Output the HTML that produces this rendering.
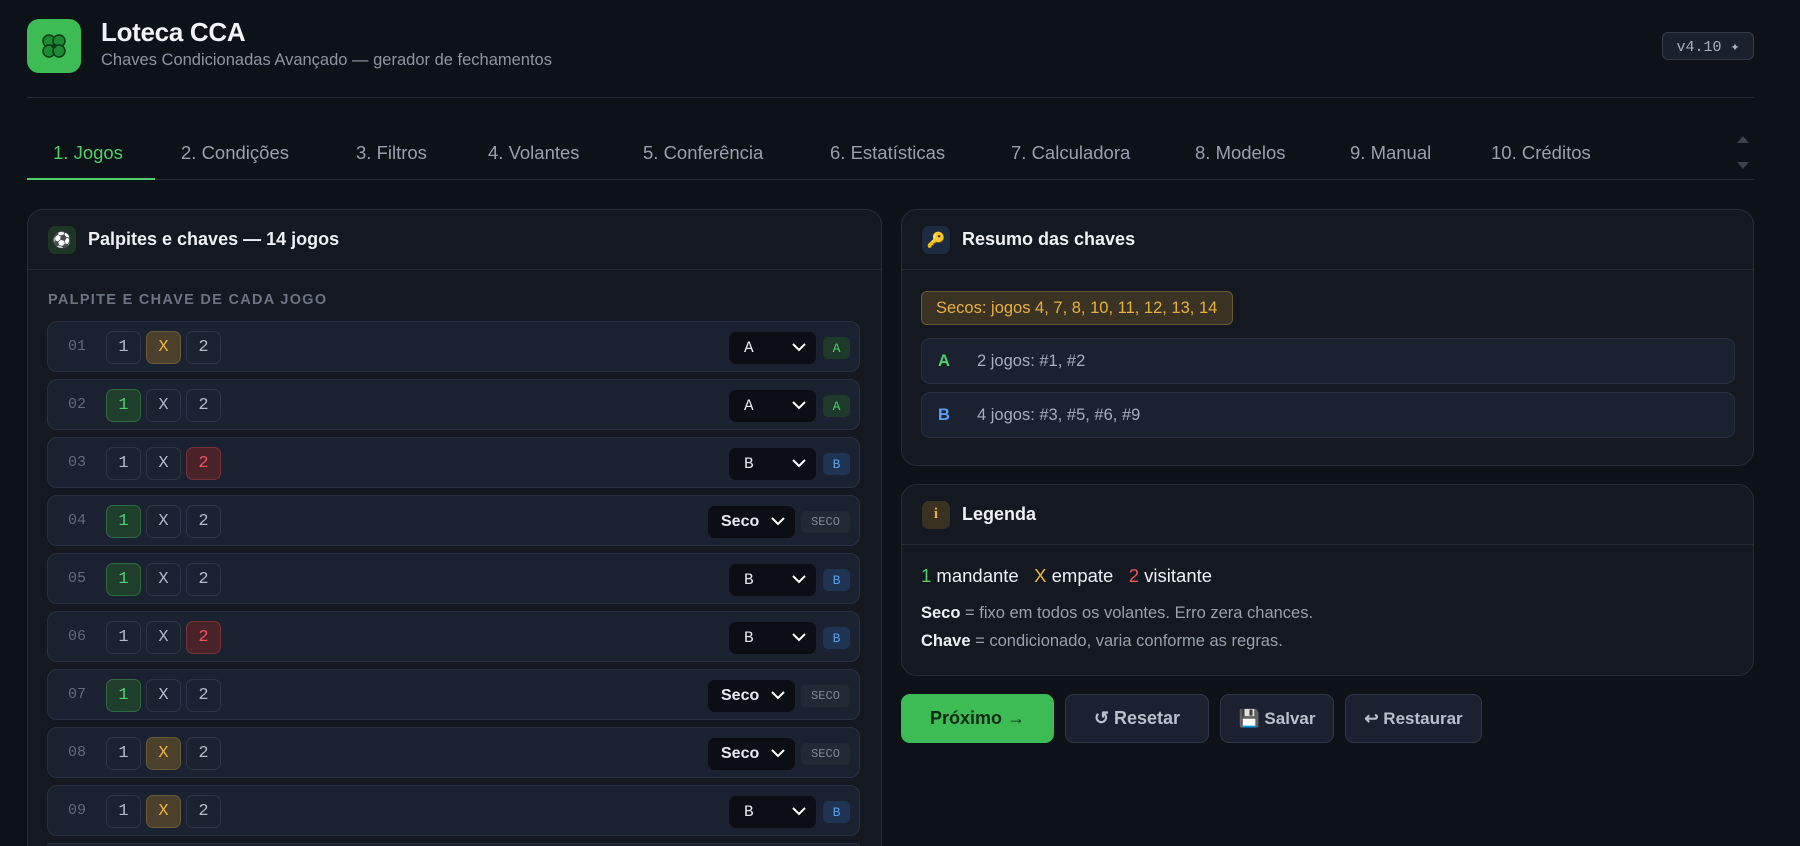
<!DOCTYPE html>
<html><head><meta charset="utf-8"><style>
*{box-sizing:border-box;margin:0;padding:0}
html,body{width:1800px;height:846px;overflow:hidden}
body{background:#0d1118;font-family:"Liberation Sans",sans-serif;color:#e6e9ef;position:relative}
.a{position:absolute}
.logo{left:27px;top:19px;width:54px;height:54px;border-radius:12px;background:#3dbb54;display:flex;align-items:center;justify-content:center}
.title{left:101px;top:17px;font-size:26px;font-weight:bold;color:#f1f3f6;letter-spacing:-0.3px}
.sub{left:101px;top:51px;font-size:16.5px;color:#8d95a3}
.ver{left:1662px;top:32px;width:92px;height:28px;border:1px solid #343c4b;background:#1b212c;border-radius:6px;font-family:"Liberation Mono",monospace;font-size:15px;color:#a8b0bd;display:flex;align-items:center;justify-content:center}
.hr{left:27px;width:1727px;height:1px;background:#262c37}
.tab{top:142px;font-size:18.5px;color:#98a0ad}
.card{background:#131821;border:1px solid #262d3a;border-radius:16px}
.ch{height:60px;border-bottom:1px solid #242b37;display:flex;align-items:center;padding-left:20px;font-size:18px;font-weight:bold;color:#eef0f4}
.ico{width:28px;height:28px;border-radius:7px;margin-right:12px;display:flex;align-items:center;justify-content:center;font-size:15px}
.row{left:47px;width:813px;height:51px;background:#1a2130;border:1px solid #283042;border-radius:10px}
.num{position:absolute;left:20px;top:16px;font-family:"Liberation Mono",monospace;font-size:15px;color:#626b7a}
.b{position:absolute;top:9px;width:35px;height:33px;border:1px solid #2d3546;border-radius:7px;font-family:"Liberation Mono",monospace;font-size:17px;color:#b3bac6;display:flex;align-items:center;justify-content:center}
.g{background:#1f3f2c;border-color:#2e6a40;color:#4fcf69}
.y{background:#4a402c;border-color:#6a5a36;color:#f0b43a}
.r{background:#4a2329;border-color:#7a3038;color:#f0525c}
.sel{position:absolute;top:10px;height:32px;background:#0b0e14;border-radius:7px;font-family:"Liberation Mono",monospace;font-size:16px;color:#e8eaee;padding-left:15px;line-height:32px}
.sel.s{font-family:"Liberation Sans",sans-serif;font-weight:bold;font-size:16px}
.sel svg{position:absolute;right:10px;top:11px}
.bd{position:absolute;top:15px;height:22px;border-radius:5px;font-family:"Liberation Mono",monospace;font-size:13px;display:flex;align-items:center;justify-content:center}
.bA{left:775px;width:27px;background:#1f3a2b;color:#4fcf69}
.bB{left:775px;width:27px;background:#1f3352;color:#5aa0f0}
.bS{left:753px;width:49px;background:#222834;color:#7f8896;font-size:12px}
.btn{top:694px;height:49px;border-radius:9px;display:flex;align-items:center;justify-content:center;font-size:18px;font-weight:bold;border:1px solid #303848;background:#1b2130;color:#b9c0cc}
</style></head><body>
<div class="a logo"><svg width="32" height="32" viewBox="0 0 32 32"><g fill="#1e8a34" stroke="#0d3a17" stroke-width="1.5"><circle cx="11" cy="11" r="6"/><circle cx="21" cy="11" r="6"/><circle cx="11" cy="21" r="6"/><circle cx="21" cy="21" r="6"/></g><circle cx="16" cy="16" r="2.5" fill="#0d3a17"/></svg></div>
<div class="a title">Loteca CCA</div>
<div class="a sub">Chaves Condicionadas Avançado — gerador de fechamentos</div>
<div class="a ver">v4.10 ✦</div>
<div class="a hr" style="top:97px"></div>
<div class="a tab" style="left:53px;color:#4fcf69">1. Jogos</div>
<div class="a tab" style="left:181px">2. Condições</div>
<div class="a tab" style="left:356px">3. Filtros</div>
<div class="a tab" style="left:488px">4. Volantes</div>
<div class="a tab" style="left:643px">5. Conferência</div>
<div class="a tab" style="left:830px">6. Estatísticas</div>
<div class="a tab" style="left:1011px">7. Calculadora</div>
<div class="a tab" style="left:1195px">8. Modelos</div>
<div class="a tab" style="left:1350px">9. Manual</div>
<div class="a tab" style="left:1491px">10. Créditos</div>
<div class="a" style="left:1737px;top:136px;width:0;height:0;border-left:6px solid transparent;border-right:6px solid transparent;border-bottom:7px solid #3a414d"></div>
<div class="a" style="left:1737px;top:162px;width:0;height:0;border-left:6px solid transparent;border-right:6px solid transparent;border-top:7px solid #3a414d"></div>
<div class="a hr" style="top:179px"></div>
<div class="a" style="left:27px;top:178px;width:128px;height:2px;background:#4fcf69"></div>

<div class="a card" style="left:27px;top:209px;width:855px;height:637px;border-bottom:none;border-radius:16px 16px 0 0">
<div class="ch"><div class="ico" style="background:#1d3526">⚽</div>Palpites e chaves — 14 jogos</div>
<div style="position:absolute;left:20px;top:82px;font-size:14.5px;letter-spacing:1.3px;color:#6c7483;font-weight:bold">PALPITE E CHAVE DE CADA JOGO</div>
</div>

<div class="a row" style="top:321px"><span class="num">01</span><div class="b" style="left:58px">1</div><div class="b y" style="left:98px">X</div><div class="b" style="left:138px">2</div><div class="sel" style="left:681px;width:87px">A<svg width="14" height="9"><path d="M1 1l6 6 6-6" stroke="#fff" stroke-width="2" fill="none"/></svg></div><div class="bd bA">A</div></div>
<div class="a row" style="top:379px"><span class="num">02</span><div class="b g" style="left:58px">1</div><div class="b" style="left:98px">X</div><div class="b" style="left:138px">2</div><div class="sel" style="left:681px;width:87px">A<svg width="14" height="9"><path d="M1 1l6 6 6-6" stroke="#fff" stroke-width="2" fill="none"/></svg></div><div class="bd bA">A</div></div>
<div class="a row" style="top:437px"><span class="num">03</span><div class="b" style="left:58px">1</div><div class="b" style="left:98px">X</div><div class="b r" style="left:138px">2</div><div class="sel" style="left:681px;width:87px">B<svg width="14" height="9"><path d="M1 1l6 6 6-6" stroke="#fff" stroke-width="2" fill="none"/></svg></div><div class="bd bB">B</div></div>
<div class="a row" style="top:495px"><span class="num">04</span><div class="b g" style="left:58px">1</div><div class="b" style="left:98px">X</div><div class="b" style="left:138px">2</div><div class="sel s" style="left:660px;width:87px;padding-left:13px">Seco<svg width="14" height="9"><path d="M1 1l6 6 6-6" stroke="#fff" stroke-width="2" fill="none"/></svg></div><div class="bd bS">SECO</div></div>
<div class="a row" style="top:553px"><span class="num">05</span><div class="b g" style="left:58px">1</div><div class="b" style="left:98px">X</div><div class="b" style="left:138px">2</div><div class="sel" style="left:681px;width:87px">B<svg width="14" height="9"><path d="M1 1l6 6 6-6" stroke="#fff" stroke-width="2" fill="none"/></svg></div><div class="bd bB">B</div></div>
<div class="a row" style="top:611px"><span class="num">06</span><div class="b" style="left:58px">1</div><div class="b" style="left:98px">X</div><div class="b r" style="left:138px">2</div><div class="sel" style="left:681px;width:87px">B<svg width="14" height="9"><path d="M1 1l6 6 6-6" stroke="#fff" stroke-width="2" fill="none"/></svg></div><div class="bd bB">B</div></div>
<div class="a row" style="top:669px"><span class="num">07</span><div class="b g" style="left:58px">1</div><div class="b" style="left:98px">X</div><div class="b" style="left:138px">2</div><div class="sel s" style="left:660px;width:87px;padding-left:13px">Seco<svg width="14" height="9"><path d="M1 1l6 6 6-6" stroke="#fff" stroke-width="2" fill="none"/></svg></div><div class="bd bS">SECO</div></div>
<div class="a row" style="top:727px"><span class="num">08</span><div class="b" style="left:58px">1</div><div class="b y" style="left:98px">X</div><div class="b" style="left:138px">2</div><div class="sel s" style="left:660px;width:87px;padding-left:13px">Seco<svg width="14" height="9"><path d="M1 1l6 6 6-6" stroke="#fff" stroke-width="2" fill="none"/></svg></div><div class="bd bS">SECO</div></div>
<div class="a row" style="top:785px"><span class="num">09</span><div class="b" style="left:58px">1</div><div class="b y" style="left:98px">X</div><div class="b" style="left:138px">2</div><div class="sel" style="left:681px;width:87px">B<svg width="14" height="9"><path d="M1 1l6 6 6-6" stroke="#fff" stroke-width="2" fill="none"/></svg></div><div class="bd bB">B</div></div>
<div class="a row" style="top:843px;height:3px;border-bottom:none;border-radius:10px 10px 0 0"></div>

<div class="a card" style="left:901px;top:209px;width:853px;height:257px">
<div class="ch"><div class="ico" style="background:#1d2b40">🔑</div>Resumo das chaves</div>
<div style="position:absolute;left:19px;top:81px;width:312px;height:34px;background:#3a3324;border:1px solid #6a5a30;border-radius:6px;color:#e8b03c;font-size:16.5px;line-height:32px;padding-left:14px">Secos: jogos 4, 7, 8, 10, 11, 12, 13, 14</div>
<div style="position:absolute;left:19px;top:128px;width:814px;height:46px;background:#1a2130;border:1px solid #283042;border-radius:9px;font-size:16.5px;line-height:44px;color:#a6aebb"><b style="color:#4fcf69;position:absolute;left:16px">A</b><span style="position:absolute;left:55px">2 jogos: #1, #2</span></div>
<div style="position:absolute;left:19px;top:182px;width:814px;height:46px;background:#1a2130;border:1px solid #283042;border-radius:9px;font-size:16.5px;line-height:44px;color:#a6aebb"><b style="color:#5aa0f0;position:absolute;left:16px">B</b><span style="position:absolute;left:55px">4 jogos: #3, #5, #6, #9</span></div>
</div>

<div class="a card" style="left:901px;top:484px;width:853px;height:192px">
<div class="ch"><div class="ico" style="background:#3a3122;color:#e8b03c;font-weight:bold;font-family:'Liberation Serif',serif">i</div>Legenda</div>
<div style="position:absolute;left:19px;top:80px;font-size:18.5px;color:#eef0f4"><span style="color:#4fcf69">1</span> mandante &nbsp;&nbsp;<span style="color:#f0b43a">X</span> empate &nbsp;&nbsp;<span style="color:#f0525c">2</span> visitante</div>
<div style="position:absolute;left:19px;top:119px;font-size:16.5px;color:#98a0ad"><b style="color:#eef0f4">Seco</b> = fixo em todos os volantes. Erro zera chances.</div>
<div style="position:absolute;left:19px;top:147px;font-size:16.5px;color:#98a0ad"><b style="color:#eef0f4">Chave</b> = condicionado, varia conforme as regras.</div>
</div>

<div class="a btn" style="left:901px;width:153px;background:#3dbb54;border-color:#3dbb54;color:#0c2a14">Próximo&nbsp;→</div>
<div class="a btn" style="left:1065px;width:144px">↺ Resetar</div>
<div class="a btn" style="left:1220px;width:114px;font-size:17px">💾 Salvar</div>
<div class="a btn" style="left:1345px;width:137px;font-size:17px">↩ Restaurar</div>
</body></html>
